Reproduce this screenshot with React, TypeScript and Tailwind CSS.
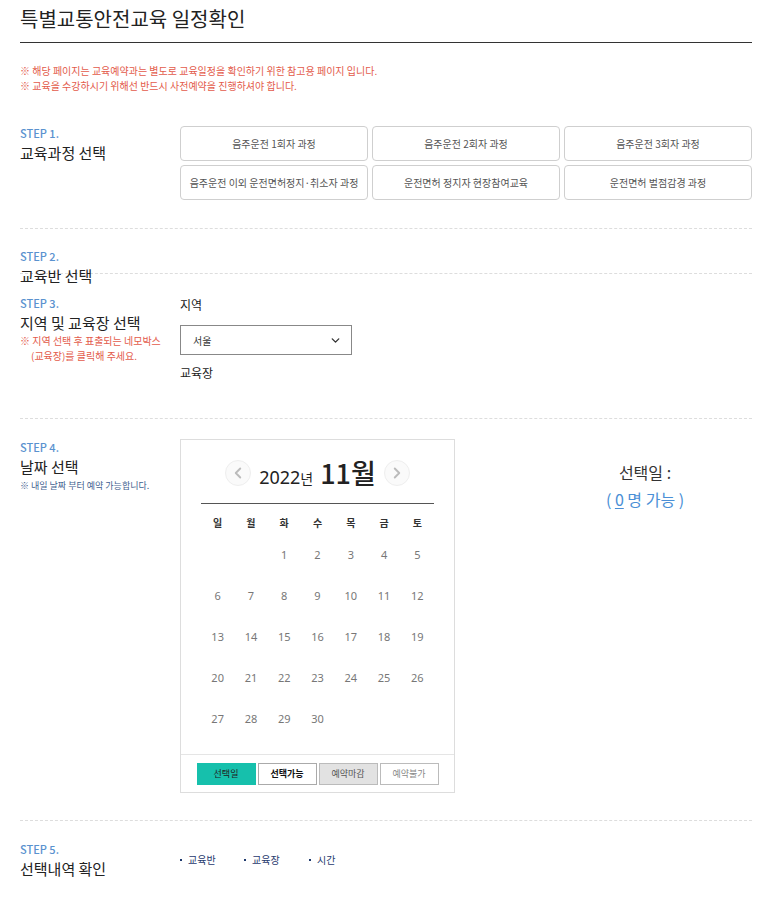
import { ChevronDown, ChevronLeft, ChevronRight } from 'lucide-react';

const FONT = '"Noto Sans CJK KR", "Noto Sans", sans-serif';

const COURSES = [
  '음주운전 1회자 과정',
  '음주운전 2회자 과정',
  '음주운전 3회자 과정',
  '음주운전 이외 운전면허정지·취소자 과정',
  '운전면허 정지자 현장참여교육',
  '운전면허 벌점감경 과정',
];

const WEEKDAYS = ['일', '월', '화', '수', '목', '금', '토'];

// November 2022 starts on Tuesday
const DAYS: (number | null)[] = [null, null, ...Array.from({ length: 30 }, (_, i) => i + 1)];

const SUMMARY = [
  { label: '교육반', width: 'w-[64px]' },
  { label: '교육장', width: 'w-[65px]' },
  { label: '시간', width: 'w-[40px]' },
];

const StepLabel = ({ step, title }: { step: string; title: string }) => (
  <>
    <div className="text-[11px] leading-[14px] font-medium text-[#5a92cf]">{step}</div>
    <div className="mt-[3px] text-[15px] leading-[20px] text-[#222]">{title}</div>
  </>
);

const App: React.FC = () => {
  return (
    <div className="min-h-screen bg-white pl-[20px]" style={{ fontFamily: FONT }}>
      <div className="w-[732px]">
        {/* Page title */}
        <div className="h-[43px] border-b border-[#333] pt-[6px]">
          <h1 className="text-[20px] leading-[26px] text-[#222]">특별교통안전교육 일정확인</h1>
        </div>

        {/* Notice */}
        <div className="mt-[20px] text-[10px] leading-[15px] text-[#e35b4b]">
          <p>※ 해당 페이지는 교육예약과는 별도로 교육일정을 확인하기 위한 참고용 페이지 입니다.</p>
          <p>※ 교육을 수강하시기 위해선 반드시 사전예약을 진행하셔야 합니다.</p>
        </div>

        {/* STEP 1 */}
        <div className="mt-[33px] flex border-b border-dashed border-[#ddd] pb-[28px]">
          <div className="w-[160px] shrink-0">
            <StepLabel step="STEP 1." title="교육과정 선택" />
          </div>
          <div className="grid flex-1 grid-cols-3 gap-[4px]">
            {COURSES.map((c) => (
              <button
                key={c}
                className="h-[35px] rounded-[4px] border border-[#cfcfcf] bg-white text-[10px] text-[#555]"
              >
                {c}
              </button>
            ))}
          </div>
        </div>

        {/* STEP 2 */}
        <div className="h-[45px] border-b border-dashed border-[#ddd] pt-[20px]">
          <StepLabel step="STEP 2." title="교육반 선택" />
        </div>

        {/* STEP 3 */}
        <div className="flex border-b border-dashed border-[#ddd] pb-[37px] pt-[22px]">
          <div className="w-[160px] shrink-0">
            <StepLabel step="STEP 3." title="지역 및 교육장 선택" />
            <p className="pl-[11px] -indent-[11px] text-[10px] leading-[15px] text-[#e35b4b]">
              ※ 지역 선택 후 표출되는 네모박스
              <br />
              (교육장)를 클릭해 주세요.
            </p>
          </div>
          <div className="flex-1 pt-[1px]">
            <div className="text-[12px] leading-[16px] text-[#222]">지역</div>
            <div className="mt-[12px] flex h-[30px] w-[172px] items-center justify-between border border-[#888] pl-[12px] pr-[9px]">
              <span className="text-[10px] text-[#333]">서울</span>
              <ChevronDown size={13} strokeWidth={2.5} className="text-[#333]" />
            </div>
            <div className="mt-[10px] text-[12px] leading-[16px] text-[#222]">교육장</div>
          </div>
        </div>

        {/* STEP 4 */}
        <div className="flex border-b border-dashed border-[#ddd] pb-[27px] pt-[20px]">
          <div className="w-[160px] shrink-0 pt-[1px]">
            <StepLabel step="STEP 4." title="날짜 선택" />
            <p className="mt-[2px] text-[9px] leading-[14px] text-[#3f5f8f]">※ 내일 날짜 부터 예약 가능합니다.</p>
          </div>

          {/* Calendar */}
          <div className="w-[275px] shrink-0 border border-[#ddd]">
            <div className="mx-[20px] flex h-[64px] items-start justify-center gap-[6px] border-b border-[#555] pt-[20px]">
              <span className="flex h-[26px] w-[26px] items-center justify-center rounded-full border border-[#eee] bg-[#fafafa]">
                <ChevronLeft size={18} strokeWidth={2.5} className="text-[#bbb]" />
              </span>
              <span className="flex items-baseline px-[2px] text-[#222]">
                <span className="text-[18px] leading-[26px]" style={{ fontFamily: '"Noto Sans", sans-serif' }}>
                  2022
                </span>
                <span className="text-[14px]">년</span>
                <span className="ml-[7px] text-[27px] font-medium leading-[26px]">11월</span>
              </span>
              <span className="flex h-[26px] w-[26px] items-center justify-center rounded-full border border-[#eee] bg-[#fafafa]">
                <ChevronRight size={18} strokeWidth={2.5} className="text-[#bbb]" />
              </span>
            </div>

            <div className="mx-[20px] mt-[9px] grid grid-cols-7">
              {WEEKDAYS.map((d) => (
                <div key={d} className="text-center text-[10px] font-bold leading-[20px] text-[#333]">
                  {d}
                </div>
              ))}
            </div>

            <div
              className="mx-[20px] mt-[2px] grid grid-cols-7 pb-[14px]"
              style={{ fontFamily: '"Noto Sans", sans-serif' }}
            >
              {DAYS.map((d, i) => (
                <div key={i} className="flex h-[41px] items-center justify-center text-[11px] text-[#777]">
                  {d ?? ''}
                </div>
              ))}
            </div>

            <div className="flex justify-center gap-[2px] border-t border-[#e5e5e5] pb-[7px] pt-[8px] text-[9px]">
              <span className="flex h-[22px] w-[59px] items-center justify-center bg-[#16c0ac] text-[#222]">선택일</span>
              <span className="flex h-[22px] w-[59px] items-center justify-center border border-[#aaa] font-bold text-[#111]">
                선택가능
              </span>
              <span className="flex h-[22px] w-[59px] items-center justify-center border border-[#bbb] bg-[#e2e2e2] text-[#555]">
                예약마감
              </span>
              <span className="flex h-[22px] w-[59px] items-center justify-center border border-[#bbb] text-[#888]">
                예약불가
              </span>
            </div>
          </div>

          {/* Selected date */}
          <div className="ml-[83px] flex-1 pt-[23px] text-center text-[16px] leading-[20px]">
            <div className="text-[#333]">선택일 :</div>
            <div className="mt-[7px] text-[#4a8fd6]">
              ( <span className="underline underline-offset-2">0</span> 명 가능 )
            </div>
          </div>
        </div>

        {/* STEP 5 */}
        <div className="flex items-start pb-[30px] pt-[21px]">
          <div className="w-[160px] shrink-0">
            <StepLabel step="STEP 5." title="선택내역 확인" />
          </div>
          <div className="flex pt-[11px] text-[10px] leading-[14px] text-[#1f3a6e]">
            {SUMMARY.map((s) => (
              <span key={s.label} className={`flex items-center ${s.width}`}>
                <span className="mr-[6px] h-[2px] w-[2px] bg-[#1f3a6e]" />
                {s.label}
              </span>
            ))}
          </div>
        </div>
      </div>
    </div>
  );
};

export default App;
